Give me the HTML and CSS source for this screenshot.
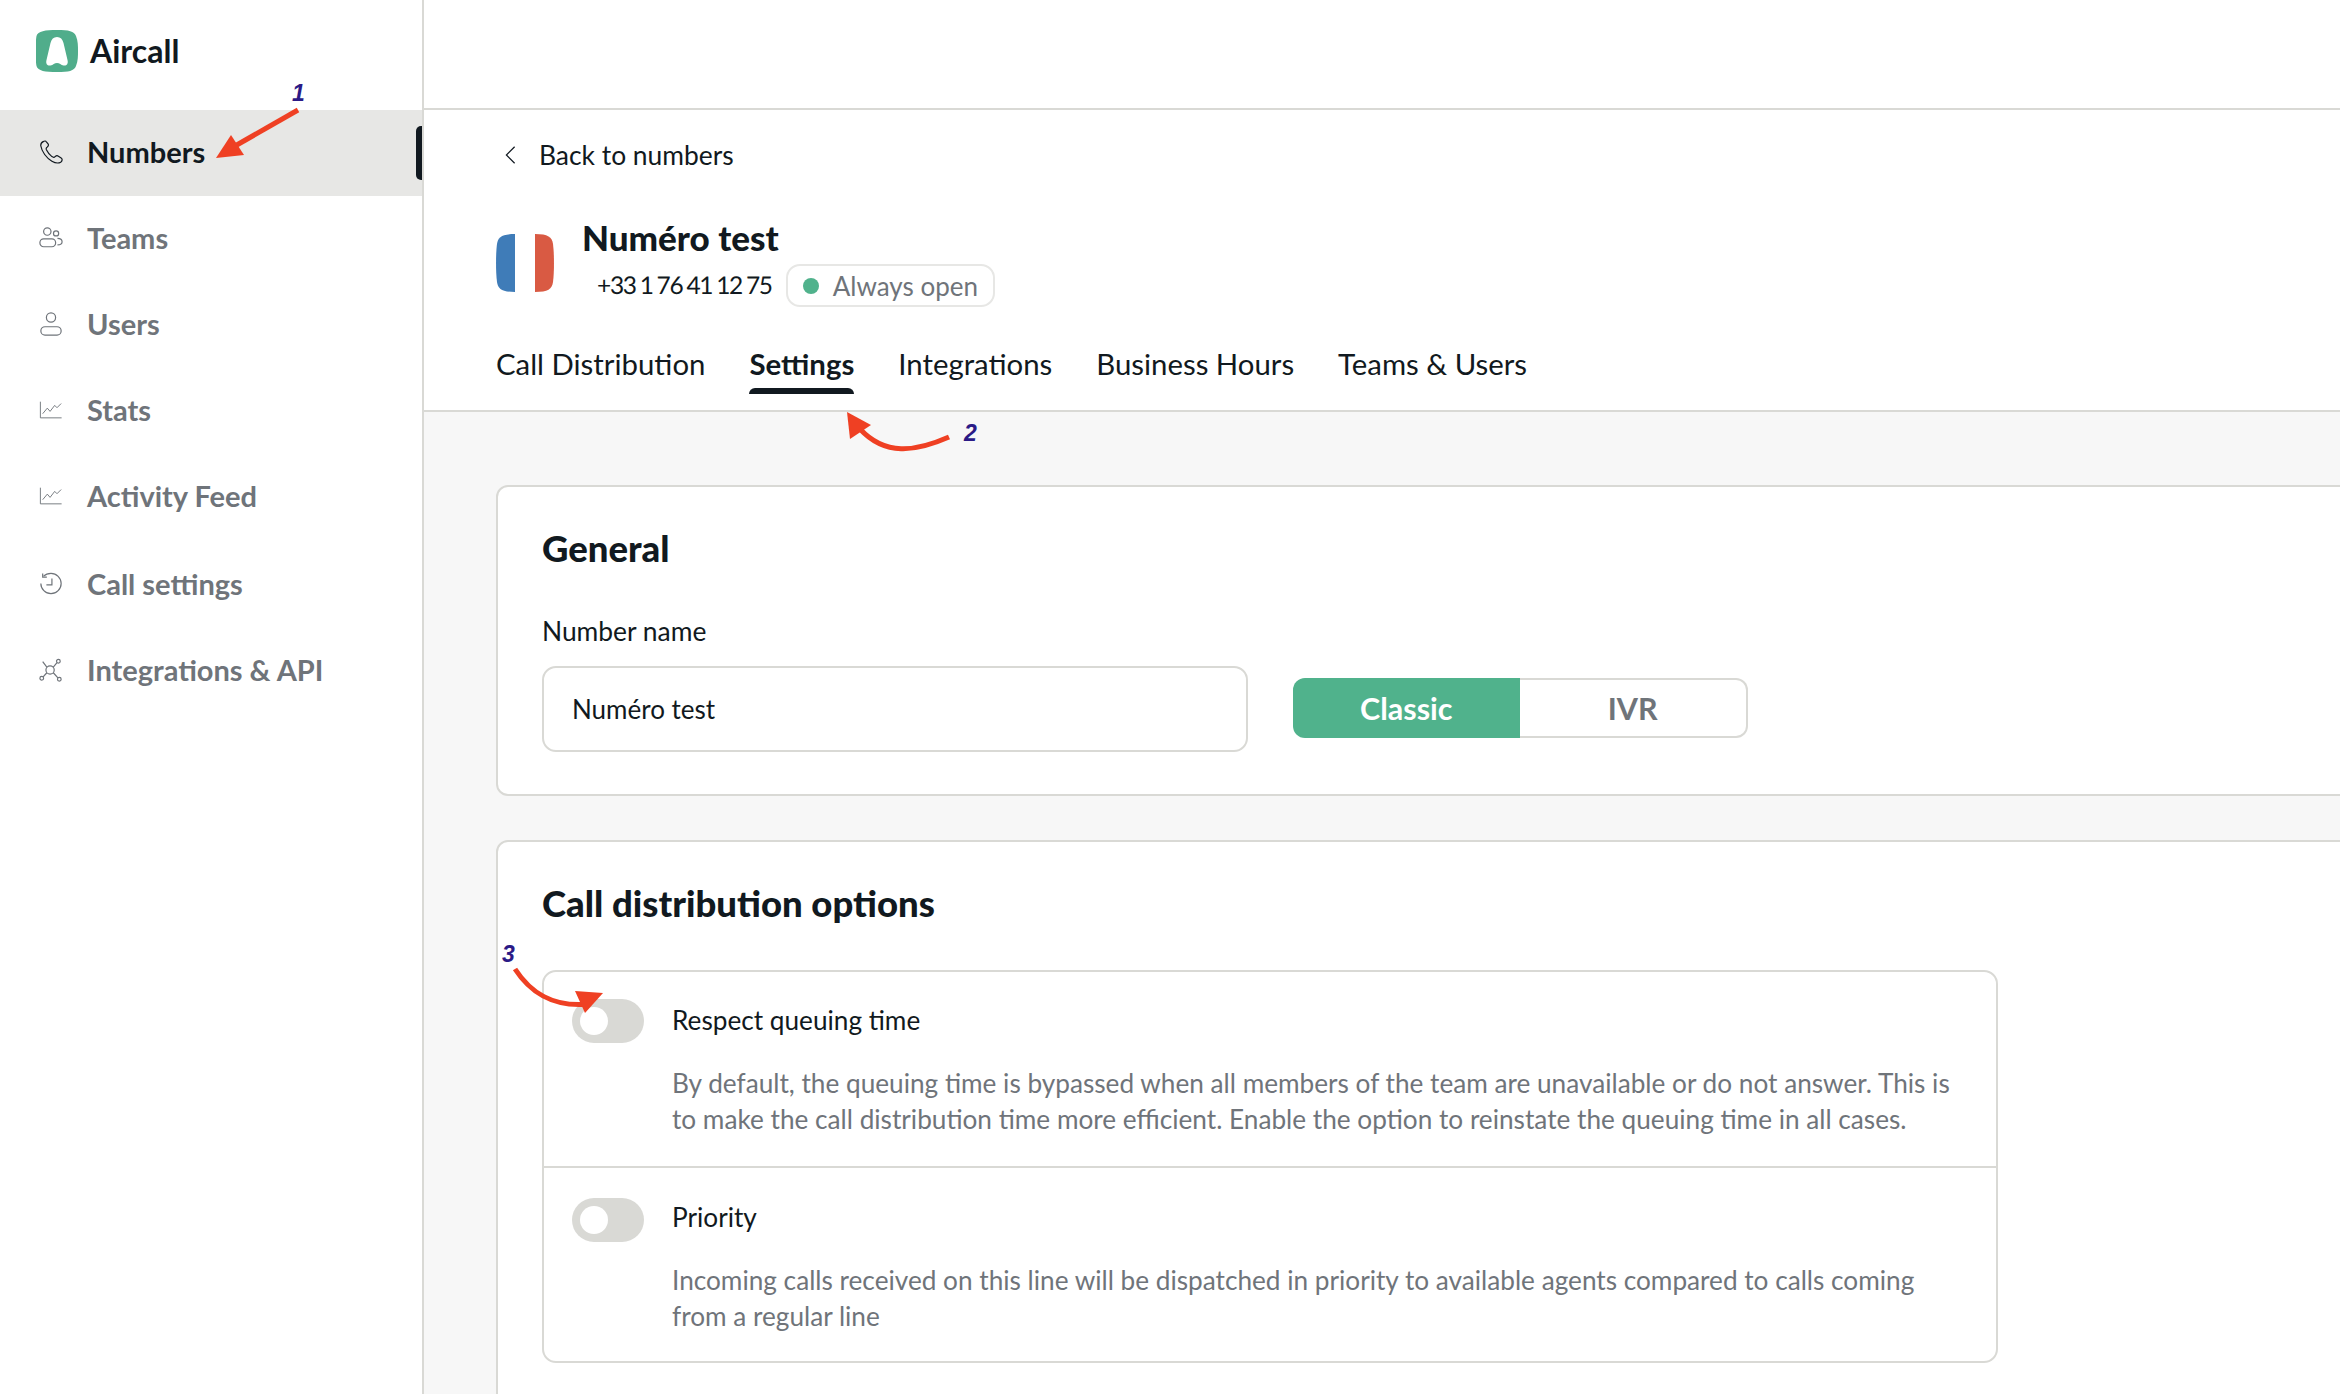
FILE: index.html
```html
<!DOCTYPE html>
<html lang="en">
<head>
<meta charset="utf-8">
<title>Aircall</title>
<link rel="stylesheet" href="styles.css">
</head>
<body>
<div class="app">
  <aside class="sidebar">
    <div class="brand">
      <svg class="logo" viewBox="0 0 42 42"><path fill="#50ad8b" d="M21 0C33 0 38 1 40 6c2 5 2 10 2 15s0 10-2 15c-2 5-7 6-19 6S2 41 0.500 36C-0.500 31 0 26 0 21S-0.500 11 0.500 6C2 1 9 0 21 0z"/><path fill="#fff" d="M21 7c3.500 0 5.500 2 6.500 6l4 17c1 4-1 6-4 5.500-2.500-.5-4-2.500-6.500-2.500s-4 2-6.500 2.500c-3 .5-5-1.500-4-5.500l4-17c1-4 3-6 6.500-6z"/></svg>
      <span class="brand-name">Aircall</span>
    </div>
    <nav class="nav">
      <a class="nav-item active">
        <svg class="nav-icon" viewBox="0 0 26 26"><path d="M5 1.500c-2 1-3.500 2.500-3 5 1 6 6 13 12 16.500 3 1.700 7 2.500 9.500 1 2-1.500 2-3.500.5-4.500l-3-2c-1.500-1-2.500-.5-3.500.5-1 1-2 1-3.500 0-2.500-2-4.500-4.500-6-7.500-.5-1.500 0-2.500 1-3 1-.8 1.500-2 1-3L8 2c-.7-1-2-1.200-3-.5z"/></svg>
        <span>Numbers</span><i class="marker"></i>
      </a>
      <a class="nav-item">
        <svg class="nav-icon" viewBox="0 0 26 26"><circle cx="9" cy="6" r="4"/><circle cx="18.500" cy="8" r="2.800"/><rect x="1" y="14" width="17" height="8.500" rx="4"/><path d="M20 13.500c3 0 5 1.500 5 3.500s-2 3.500-5 3.500"/></svg>
        <span>Teams</span>
      </a>
      <a class="nav-item">
        <svg class="nav-icon" viewBox="0 0 26 26"><circle cx="13" cy="6" r="5"/><rect x="2" y="16" width="22" height="9" rx="4.500"/></svg>
        <span>Users</span>
      </a>
      <a class="nav-item">
        <svg class="nav-icon thin" viewBox="0 0 26 26"><path d="M1.500 4v17.500h23"/><path d="M4 17l5-6 3 3.500 5-6.500 2.500 2.500L24 6"/></svg>
        <span>Stats</span>
      </a>
      <a class="nav-item">
        <svg class="nav-icon thin" viewBox="0 0 26 26"><path d="M1.500 4v17.500h23"/><path d="M4 17l5-6 3 3.500 5-6.500 2.500 2.500L24 6"/></svg>
        <span>Activity Feed</span>
      </a>
      <a class="nav-item spaced">
        <svg class="nav-icon" viewBox="0 0 26 26"><path d="M5 4.500C7 2.500 10 1.500 13 1.500c6 0 11 5 11 11s-5 11-11 11S2 18.500 2 12.500"/><path d="M4 1.500v4h4.500"/><path d="M14 7v7H8"/></svg>
        <span>Call settings</span>
      </a>
      <a class="nav-item">
        <svg class="nav-icon" viewBox="0 0 26 26"><circle cx="12" cy="13" r="4.500"/><circle cx="21" cy="3.500" r="2"/><circle cx="22" cy="23" r="2"/><circle cx="3" cy="22" r="2"/><path d="M15.500 10l4-5M15.500 16l5 5.500M8.500 16l-4 4.500M8.500 10L4 4"/></svg>
        <span>Integrations &amp; API</span>
      </a>
    </nav>
  </aside>

  <main class="main">
    <div class="topbar"></div>
    <header class="header">
      <a class="back">
        <svg class="chevron" viewBox="0 0 12 20"><path d="M10.500 1L1.500 10l9 9"/></svg>
        <span>Back to numbers</span>
      </a>
      <div class="identity">
        <svg class="flag" viewBox="0 0 58 58"><path fill="#3f7cb8" d="M19 0C6 0 2 3 1 10-.3 20-.3 38 1 48c1 7 5 10 18 10z"/><rect x="19" width="20" height="58" fill="#fff"/><path fill="#d95a43" d="M39 0c13 0 17 3 18 10 1.300 10 1.300 28 0 38-1 7-5 10-18 10z"/></svg>
        <div class="identity-text">
          <h1 class="title">Numéro test</h1>
          <div class="meta">
            <span class="phone">+33 1 76 41 12 75</span>
            <span class="badge"><i class="dot"></i>Always open</span>
          </div>
        </div>
      </div>
      <div class="tabs">
        <a class="tab">Call Distribution</a>
        <a class="tab current">Settings</a>
        <a class="tab">Integrations</a>
        <a class="tab">Business Hours</a>
        <a class="tab">Teams &amp; Users</a>
      </div>
    </header>

    <div class="content">
      <section class="card general">
        <h2 class="card-title">General</h2>
        <label class="field-label">Number name</label>
        <div class="field-row">
          <div class="input">Numéro test</div>
          <div class="segments">
            <span class="segment on">Classic</span>
            <span class="segment off">IVR</span>
          </div>
        </div>
      </section>

      <section class="card options">
        <h2 class="card-title">Call distribution options</h2>
        <div class="option-box">
          <div class="option">
            <span class="toggle"><i class="knob"></i></span>
            <div class="option-body">
              <div class="option-label">Respect queuing time</div>
              <p class="option-desc">By default, the queuing time is bypassed when all members of the team are unavailable or do not answer. This is to make the call distribution time more efficient. Enable the option to reinstate the queuing time in all cases.</p>
            </div>
          </div>
          <div class="option">
            <span class="toggle"><i class="knob"></i></span>
            <div class="option-body">
              <div class="option-label">Priority</div>
              <p class="option-desc">Incoming calls received on this line will be dispatched in priority to available agents compared to calls coming from a regular line</p>
            </div>
          </div>
        </div>
      </section>
    </div>
  </main>

  <svg class="annotations" viewBox="0 0 2340 1394">
    <path class="arrow-line" d="M298 110L228 150"/>
    <path class="arrow-head" d="M216 158L231 135L244 155z"/>
    <path class="arrow-line" d="M949 437C915 452 885 456 860 429"/>
    <path class="arrow-head" d="M847 412L871 425L850 439z"/>
    <path class="arrow-line" d="M515 969C530 992 552 1008 590 1004"/>
    <path class="arrow-head" d="M603 993L575 991L585 1013z"/>
  </svg>
  <span class="note note-1">1</span>
  <span class="note note-2">2</span>
  <span class="note note-3">3</span>
</div>
</body>
</html>
```
FILE: styles.css
```css
* { box-sizing: border-box; }
html, body { margin: 0; padding: 0; }
body { font-family: "Lato", "Liberation Sans", sans-serif; color: #111920; background: #fff; }

.app { position: relative; display: flex; width: 2340px; height: 1394px; overflow: hidden; }

.sidebar { flex: 0 0 424px; border-right: 2px solid #d9d9d5; background: #fff; }
.brand { display: flex; align-items: center; gap: 12px; height: 110px; padding: 0 0 8px 36px; }
.logo { width: 42px; height: 42px; }
.brand-name { font-size: 32px; font-weight: 700; position: relative; top: -1px; }

.nav { display: flex; flex-direction: column; }
.nav-item { position: relative; display: flex; align-items: center; gap: 24px; height: 86px; padding: 0 0 3px 39px; font-size: 29px; font-weight: 700; color: #6f747a; }
.nav-item.active { background: #e7e7e5; color: #111920; }
.nav-item.spaced { margin-top: 2px; }
.nav-icon { width: 24px; height: 24px; fill: none; stroke: #6f747a; stroke-width: 1.300; }
.nav-icon.thin { stroke-width: 1; }
.active .nav-icon { stroke: #111920; }
.marker { position: absolute; right: 0; top: 16px; width: 6px; height: 54px; border-radius: 5px 0 0 5px; background: #111920; }

.main { flex: 1; min-width: 0; display: flex; flex-direction: column; background: #f7f7f7; }
.topbar { flex: 0 0 110px; background: #fff; border-bottom: 2px solid #d9d9d5; }
.header { flex: 0 0 302px; background: #fff; border-bottom: 2px solid #d9d9d5; padding: 0 0 0 72px; display: flex; flex-direction: column; }
.back { display: flex; align-items: center; gap: 23px; height: 62px; margin-top: 14px; padding-left: 9px; font-size: 26.400px; }
.chevron { width: 11px; height: 20px; fill: none; stroke: #111920; stroke-width: 1.300; }
.identity { display: flex; gap: 28px; margin-top: 26px; height: 96px; }
.flag { width: 58px; height: 58px; margin-top: 22px; }
.title { margin: 0; font-size: 35px; line-height: 50px; font-weight: 900; }
.meta { display: flex; align-items: center; gap: 14px; padding-left: 15px; margin-top: 2px; }
.phone { font-size: 24.500px; letter-spacing: -1.300px; word-spacing: -1px; text-rendering: geometricPrecision; }
.badge { display: flex; align-items: center; gap: 14px; height: 43px; padding: 0 15px; border: 2px solid #e7e7e5; border-radius: 14px; font-size: 26px; color: #6f747a; }
.dot { width: 16px; height: 16px; border-radius: 50%; background: #50b28c; }
.tabs { display: flex; gap: 44px; margin-top: 33px; }
.tab { position: relative; height: 53px; padding-top: 5px; font-size: 29.350px; line-height: 36px; }
.tab.current { font-weight: 700; }
.tab.current::after { content: ""; position: absolute; left: 0; right: 0; bottom: 0; height: 6px; border-radius: 6px 6px 0 0; background: #111920; }

.content { padding: 73px 0 0 72px; display: flex; flex-direction: column; gap: 44px; width: 2100px; }
.card { background: #fff; border: 2px solid #d9d9d5; border-radius: 12px; padding: 0 0 0 44px; }
.general { height: 311px; }
.card-title { margin: 0; padding-top: 36px; font-size: 36.500px; line-height: 50px; font-weight: 900; }
.field-label { display: block; margin-top: 41px; font-size: 26.400px; line-height: 34px; }
.field-row { display: flex; align-items: center; gap: 45px; margin-top: 18px; }
.input { width: 706px; height: 86px; border: 2px solid #d9d9d5; border-radius: 14px; padding-left: 28px; display: flex; align-items: center; font-size: 26px; }
.segments { display: flex; width: 455px; height: 60px; margin-top: -2px; }
.segment { flex: 1; display: flex; align-items: center; justify-content: center; font-size: 30.500px; font-weight: 700; }
.segment.on { background: #50b28c; color: #fff; border-radius: 12px 0 0 12px; }
.segment.off { background: #fff; color: #6f747a; border: 2px solid #d9d9d5; border-left: 0; border-radius: 0 12px 12px 0; }

.options { height: 700px; }
.option-box { width: 1456px; margin-top: 42px; border: 2px solid #d9d9d5; border-radius: 14px; }
.option { display: flex; gap: 28px; height: 194px; padding: 27px 28px 0; }
.option + .option { border-top: 2px solid #d9d9d5; height: 195px; padding-top: 30px; }
.toggle { flex: 0 0 72px; height: 44px; padding: 8px; border-radius: 22px; background: #d9d9d5; }
.knob { display: block; width: 28px; height: 28px; border-radius: 50%; background: #fff; }
.option-label { font-size: 26.200px; line-height: 42px; }
.option + .option .option-label { margin-top: -2px; }
.option-desc { margin: 24px 0 0; font-size: 26.200px; line-height: 36px; color: #6f747a; }

.annotations { position: absolute; left: 0; top: 0; width: 2340px; height: 1394px; pointer-events: none; }
.arrow-line { fill: none; stroke: #ef4023; stroke-width: 5; }
.arrow-head { fill: #ef4023; }
.note { position: absolute; font-family: "Liberation Sans", sans-serif; font-size: 23px; line-height: 24px; font-weight: 700; font-style: italic; color: #2b1a86; }
.note-1 { left: 292px; top: 81px; }
.note-2 { left: 964px; top: 421px; }
.note-3 { left: 502px; top: 942px; }
```
